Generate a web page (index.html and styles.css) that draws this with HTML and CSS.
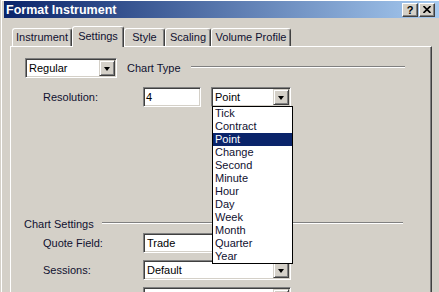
FILE: index.html
```html
<!DOCTYPE html>
<html lang="en">
<head>
  <meta charset="UTF-8" />
  <title>Format Instrument</title>
  <link rel="stylesheet" href="styles.css">
</head>
<body>
  <div class="window">
    <div class="titlebar">
      <span class="title">Format Instrument</span>
      <span class="caption-btn help">?</span>
      <span class="caption-btn close">
        <svg width="8" height="7" viewBox="0 0 8 7"><path d="M0.5 0 L7.5 7 M7.5 0 L0.5 7" stroke="#000" stroke-width="1.6" fill="none"/></svg>
      </span>
    </div>

    <div class="tabs">
      <div class="tab tab-instrument">Instrument</div>
      <div class="tab tab-settings active">Settings</div>
      <div class="tab tab-style">Style</div>
      <div class="tab tab-scaling">Scaling</div>
      <div class="tab tab-volume">Volume Profile</div>
    </div>

    <div class="panel">
      <div class="group">
        <div class="combo combo-type"><span class="combo-text">Regular</span><span class="combo-btn"></span></div>
        <span class="group-title">Chart Type</span>
        <span class="group-line"></span>
      </div>

      <div class="field">
        <span class="field-label">Resolution:</span>
        <div class="textbox">4</div>
        <div class="combo combo-unit">
          <span class="combo-text">Point</span><span class="combo-btn"></span>
          <ul class="dropdown">
            <li>Tick</li>
            <li>Contract</li>
            <li class="selected">Point</li>
            <li>Change</li>
            <li>Second</li>
            <li>Minute</li>
            <li>Hour</li>
            <li>Day</li>
            <li>Week</li>
            <li>Month</li>
            <li>Quarter</li>
            <li>Year</li>
          </ul>
        </div>
      </div>

      <div class="group group-settings">
        <span class="group-title">Chart Settings</span>
        <span class="group-line"></span>
      </div>

      <div class="field field-tight">
        <span class="field-label">Quote Field:</span>
        <div class="combo combo-wide"><span class="combo-text">Trade</span><span class="combo-btn"></span></div>
      </div>
      <div class="field field-next">
        <span class="field-label">Sessions:</span>
        <div class="combo combo-wide"><span class="combo-text">Default</span><span class="combo-btn"></span></div>
      </div>
      <div class="field field-next">
        <span class="field-label">Bid Volume Source:</span>
        <div class="combo combo-wide"><span class="combo-text">Trade Volume</span><span class="combo-btn"></span></div>
      </div>
    </div>
  </div>
</body>
</html>
```

FILE: styles.css
```css
body {
  margin: 0;
  background: #d4d0c8;
  font-family: "Liberation Sans", Arial, sans-serif;
  font-size: 11px;
  color: #101030;
  overflow: hidden;
}
.window {
  height: 292px;
  box-sizing: border-box;
  padding: 1px 0 0 3px;
  border-left: 1px solid #d4d0c8;
  box-shadow: inset 1px 1px #fff;
}
.titlebar {
  display: flex;
  align-items: center;
  height: 17px;
  padding: 0 4px 0 2px;
  background: linear-gradient(to right, #0a246a, #a6caf0);
}
.title {
  flex: 1;
  color: #fff;
  font-weight: bold;
  font-size: 12.5px;
}
.caption-btn {
  width: 16px;
  height: 14px;
  box-sizing: border-box;
  display: flex;
  align-items: center;
  justify-content: center;
  background: #d4d0c8;
  border: 1px solid;
  border-color: #fff #404040 #404040 #fff;
  box-shadow: inset -1px -1px #808080;
  color: #000;
}
.help {
  margin-right: 1px;
  font-weight: bold;
  font-size: 11px;
  line-height: 12px;
}

/* tabs */
.tabs {
  display: flex;
  align-items: flex-end;
  height: 20px;
  margin: 8px 0 0 8px;
}
.tab {
  height: 18px;
  box-sizing: border-box;
  border: 1px solid;
  border-bottom: none;
  border-color: #fff #404040 transparent #fff;
  border-radius: 3px 3px 0 0;
  box-shadow: inset -1px 0 #808080;
  text-align: center;
  line-height: 17px;
  white-space: nowrap;
}
.tab.active {
  height: 21px;
  margin-bottom: -1px;
  position: relative;
  z-index: 1;
  background: #d4d0c8;
  line-height: 18px;
}
.tab-instrument { width: 60px; }
.tab-settings { width: 52px; }
.tab-style { width: 41px; }
.tab-scaling { width: 46px; }
.tab-volume { width: 80px; }

/* panel */
.panel {
  height: 250px;
  margin: 0 7px 0 6px;
  padding: 11px 0 0 14px;
  border-top: 1px solid #fff;
  border-left: 1px solid #fff;
  border-right: 1px solid #404040;
  box-shadow: inset -1px 0 #808080;
}
.group {
  display: flex;
  align-items: center;
  height: 20px;
}
.group-title {
  margin-left: 10px;
  white-space: nowrap;
}
.group-line {
  flex: 1;
  height: 2px;
  box-sizing: border-box;
  margin: 0 26px 2px 10px;
  border-top: 1px solid #808080;
  border-bottom: 1px solid #fff;
}
.group-settings {
  height: 14px;
  margin: 110px 0 0 -1px;
}
.group-settings .group-title { margin-left: 0; }
.group-settings .group-line { margin: 0 28px 2px 8px; }

.field {
  display: flex;
  align-items: center;
  height: 20px;
  margin-top: 9px;
  padding-left: 18px;
}
.field-tight { margin-top: 2px; }
.field-next { margin-top: 7px; }
.field-label {
  width: 100px;
  white-space: nowrap;
}

/* controls */
.textbox, .combo {
  height: 20px;
  box-sizing: border-box;
  border: 1px solid;
  border-color: #808080 #fff #fff #808080;
  box-shadow: inset 1px 1px #404040, inset -1px -1px #d4d0c8;
  background: #fff;
  color: #000;
}
.textbox {
  width: 58px;
  padding: 2px 0 0 2px;
  line-height: 15px;
}
.combo {
  display: flex;
  align-items: center;
  padding: 1px;
  position: relative;
}
.combo-text {
  flex: 1;
  padding-left: 2px;
  white-space: nowrap;
}
.combo-btn {
  width: 16px;
  height: 16px;
  box-sizing: border-box;
  display: flex;
  align-items: center;
  justify-content: center;
  background: #d4d0c8;
  border: 1px solid;
  border-color: #d4d0c8 #404040 #404040 #d4d0c8;
  box-shadow: inset 1px 1px #fff, inset -1px -1px #808080;
}
.combo-btn::after {
  content: "";
  width: 0;
  height: 0;
  margin-top: 1px;
  border-top: 4px solid #000;
  border-left: 3.5px solid transparent;
  border-right: 3.5px solid transparent;
}
.combo-type { width: 92px; }
.combo-unit { width: 80px; margin-left: 10px; }
.combo-wide { width: 148px; }

.dropdown {
  position: absolute;
  top: 100%;
  left: 0;
  z-index: 2;
  width: 81px;
  box-sizing: border-box;
  margin: 0;
  padding: 0;
  list-style: none;
  background: #fff;
  border: 1px solid #000;
  color: #101030;
}
.dropdown li {
  height: 13px;
  line-height: 13px;
  padding-left: 2px;
}
.dropdown li.selected {
  background: #0a246a;
  color: #fff;
}
```
